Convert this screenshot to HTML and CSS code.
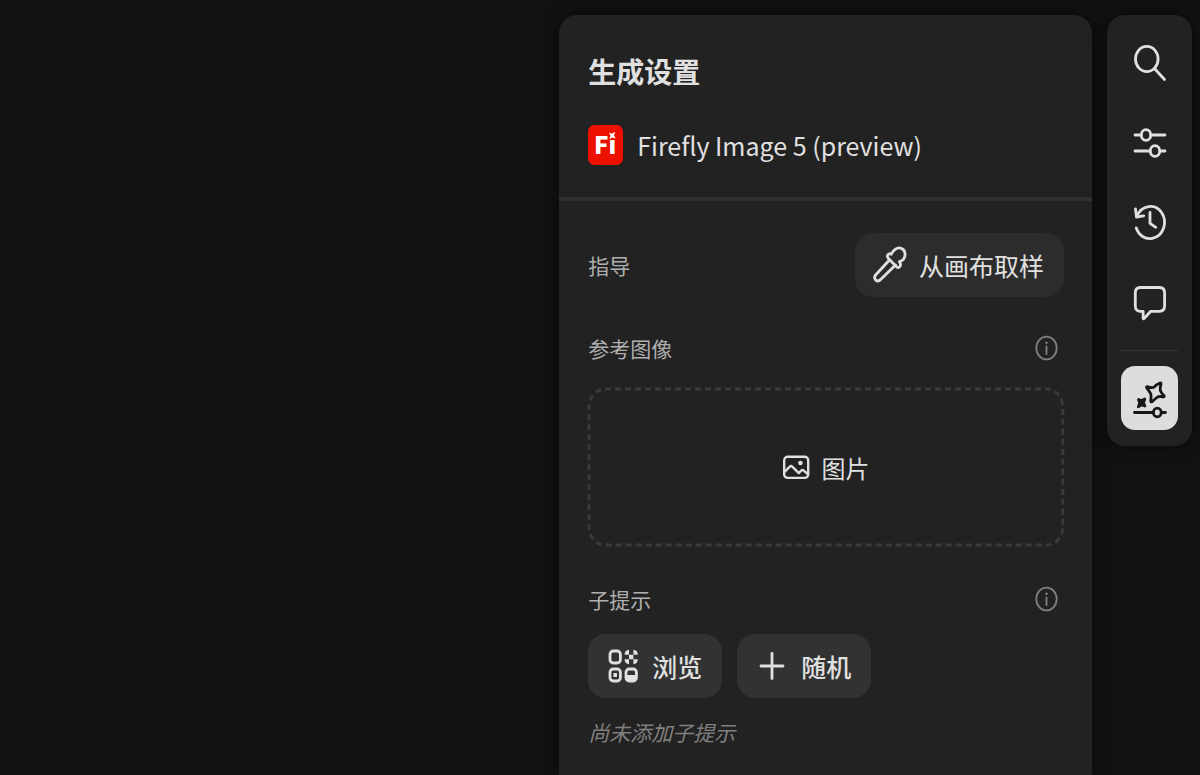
FILE: index.html
```html
<!DOCTYPE html>
<html lang="zh-CN">
<head>
  <meta charset="UTF-8">
  <meta name="viewport" content="width=device-width, initial-scale=1.0">
  <title>生成设置</title>
  <link rel="stylesheet" href="styles.css">
</head>
<body>
  <div class="app">
    <section class="panel" aria-labelledby="panel-title">
      <header class="panel-header">
        <h1 class="panel-title" id="panel-title">生成设置</h1>
        <div class="model">
          <svg class="model-logo" width="36" height="40" viewBox="0 0 36 40" aria-hidden="true">
            <rect width="35" height="40" rx="6" ry="7" fill="#eb1000"/>
            <text class="logo-text" x="6" y="29">Fi</text>
            <path d="M20 5h10v9.500h-10z" fill="#eb1000"/>
            <path d="M21 7.500l2.800 1.300 3.500-2-1.300 3.500 1.500 3.200-3.200-1-3 1.700 1.200-3.400z" fill="#fff"/>
          </svg>
          <span class="model-name">Firefly Image 5 (preview)</span>
        </div>
      </header>

      <div class="panel-body">
        <div class="row">
          <h2 class="label">指导</h2>
          <button type="button" class="button button-sample">
            <svg width="34" height="38" viewBox="0 0 34 38" class="icon" aria-hidden="true">
              <path d="M16.500 14L2.800 28.800c-3 3.400.4 8 4.300 5.200L22.500 19"/>
              <path d="M18.200 8.200c-2.400-1.600-5 1.600-3 4l8.300 8.600c2.200 2 5-.900 3.600-3.700l-.7-1.400c3.800-1 5.800-4 5.700-7.700-.3-5.400-5.600-7.600-9.600-4.800-1.900 1.300-3.300 2.900-4.300 5z"/>
            </svg>
            从画布取样
          </button>
        </div>

        <div class="row reference-row">
          <h2 class="label">参考图像</h2>
          <button type="button" class="info" aria-label="参考图像">
            <svg width="23" height="26" viewBox="0 0 23 26" aria-hidden="true">
              <ellipse cx="11.5" cy="13" rx="10.2" ry="11.4" fill="none" stroke="currentColor" stroke-width="1.8"/>
              <ellipse cx="11.5" cy="7.8" rx="1.2" ry="1.3" fill="currentColor"/>
              <path d="M11.5 11.5v7.5" fill="none" stroke="currentColor" stroke-width="1.8" stroke-linecap="round"/>
            </svg>
          </button>
        </div>
        <button type="button" class="dropzone">
          <svg width="27" height="24" viewBox="0 0 27 24" class="icon icon-image" aria-hidden="true">
            <rect x="1.2" y="1.7" width="24" height="21.2" rx="3.5"/>
            <path d="M1.500 17l5-5.200q1.500-1.400 3 0l6.300 6.300 2.400-2.400q1.300-1.200 2.600 0l4.300 3.600"/>
            <circle cx="17.4" cy="8" r="2.300" fill="currentColor" stroke="none"/>
          </svg>
          图片
          <svg class="dropzone-border" width="100%" height="100%" aria-hidden="true">
            <rect x="1" y="1" rx="16" ry="18"/>
          </svg>
        </button>

        <div class="row prompt-row">
          <h2 class="label">子提示</h2>
          <button type="button" class="info" aria-label="子提示">
            <svg width="23" height="26" viewBox="0 0 23 26" aria-hidden="true">
              <ellipse cx="11.5" cy="13" rx="10.2" ry="11.4" fill="none" stroke="currentColor" stroke-width="1.8"/>
              <ellipse cx="11.5" cy="7.8" rx="1.2" ry="1.3" fill="currentColor"/>
              <path d="M11.5 11.5v7.5" fill="none" stroke="currentColor" stroke-width="1.8" stroke-linecap="round"/>
            </svg>
          </button>
        </div>
        <div class="actions">
          <button type="button" class="button">
            <svg width="30" height="34" viewBox="0 0 30 34" class="icon" aria-hidden="true">
              <rect x="2" y="2" width="10.400" height="12" rx="3.200"/>
              <rect x="2" y="20" width="10.400" height="12" rx="3.200"/>
              <rect x="5.400" y="24" width="3.600" height="4" rx=".6" fill="currentColor" stroke="none"/>
              <rect x="18" y="20" width="10.400" height="12" rx="3.200"/>
              <path d="M18 26h10.400v3q0 3-3 3h-4.400q-3 0-3-3z" fill="currentColor" stroke="none"/>
              <path d="M21 5.700h4.400v4.600H21zM21 .8v4.900h-4.400q0-4.500 4.400-4.900zM25.400.8q4.400.4 4.400 4.900h-4.400zM16.600 10.300H21v4.900q-4.400-.4-4.400-4.900zM25.400 10.300h4.400q0 4.500-4.400 4.900z" fill="currentColor" stroke="none"/>
            </svg>
            浏览
          </button>
          <button type="button" class="button">
            <svg width="30" height="34" viewBox="0 0 30 34" class="icon" aria-hidden="true">
              <path d="M15 4.500v25M4 17h22"/>
            </svg>
            随机
          </button>
        </div>
        <p class="empty">尚未添加子提示</p>
      </div>
    </section>

    <nav class="toolbar" aria-label="工具">
      <button type="button" class="tool" aria-label="搜索">
        <svg width="34" height="38" viewBox="0 0 34 38" class="icon" aria-hidden="true">
          <ellipse cx="13.800" cy="15" rx="11.300" ry="12.600"/>
          <path d="M21.500 24.500L31.500 35.500"/>
        </svg>
      </button>
      <button type="button" class="tool" aria-label="调整">
        <svg width="34" height="38" viewBox="0 0 34 38" class="icon" aria-hidden="true">
          <path d="M2 11h6M18 11H32M2 27h15M27 27h5"/>
          <ellipse cx="13" cy="11" rx="4.700" ry="5.300"/>
          <ellipse cx="22" cy="27" rx="4.700" ry="5.300"/>
        </svg>
      </button>
      <button type="button" class="tool" aria-label="历史记录">
        <svg width="34" height="38" viewBox="0 0 34 38" class="icon" aria-hidden="true">
          <path d="M3.700 12.600C8.500.9 22.300-1 28.700 8.700c6.300 9.600 1.700 23.500-9.300 25.700-7.300 1.400-13.700-3-16.200-10.500"/>
          <path d="M2.500 5l1 8 7.200-1.200"/>
          <path d="M17 8.500v10.800l5.800 4"/>
        </svg>
      </button>
      <button type="button" class="tool" aria-label="评论">
        <svg width="34" height="38" viewBox="0 0 34 38" class="icon" aria-hidden="true">
          <path d="M7.300 3.500h19.300q5 0 5 5.500v12.800q0 5.500-5 5.500h-8.900l-6.600 7.200c-.6.600-1 .3-1-.5v-6.700H7.300q-5 0-5-5.500V9q0-5.500 5-5.500z"/>
        </svg>
      </button>
      <hr class="divider">
      <button type="button" class="tool tool-active" aria-label="生成设置" aria-pressed="true">
        <svg width="34" height="38" viewBox="0 0 34 38" class="icon" aria-hidden="true">
          <path d="M14.300 7.600Q18.500 9.300 21 8.300Q23 5.500 27 4Q28.300 3.600 28 5Q26.800 9 27.300 11.500Q28.600 14.500 31 16.600Q31.700 18 30.200 18Q27 17 24.500 18Q22 20 19 22.800Q17.700 23.300 17.700 21.800Q18.500 17.500 17.800 14.800Q16 11.500 13.700 8.800Q13.200 7.500 14.300 7.600z"/>
          <path d="M5.500 20.500l3 1.100 3.300-1.600-1.400 3.700 1.500 3.300-3.200-1.100-3.400 2 1.400-3.900z" fill="currentColor"/>
          <path d="M1.500 33.500h18.500M29 33.500h3.500"/>
          <ellipse cx="24.300" cy="33.500" rx="3.900" ry="4.300"/>
        </svg>
      </button>
    </nav>
  </div>
</body>
</html>
```
FILE: styles.css
```css
* {
  box-sizing: border-box;
}
body {
  margin: 0;
  background-color: #111111;
  color: #e0e0e0;
  font-family: "Noto Sans CJK SC", sans-serif;
}
button {
  font-family: inherit;
  color: inherit;
  border: none;
  background: none;
  padding: 0;
  cursor: pointer;
}
svg {
  display: block;
  flex-shrink: 0;
}
.app {
  display: flex;
  justify-content: flex-end;
  gap: 15px;
  min-height: 100vh;
  padding: 15px 8px 0;
}
.icon {
  fill: none;
  stroke: currentColor;
  stroke-width: 2.8;
  stroke-linecap: round;
  stroke-linejoin: round;
  overflow: visible;
}
.icon-image {
  stroke-width: 2.4;
}

/* settings panel */
.panel {
  width: 45%;
  background-color: #222222;
  border-radius: 18px 18px 0 0;
  box-shadow: 0 0 14px rgba(0, 0, 0, 0.5);
}
.panel-header {
  padding: 40px 28px 32px 29px;
  border-bottom: 4px solid #303030;
}
.panel-title {
  margin: 0 0 38px;
  font-size: 28px;
  line-height: 32px;
  font-weight: 700;
}
.model {
  display: flex;
  align-items: center;
  gap: 13px;
}
.logo-text {
  font-family: "Noto Sans CJK SC", sans-serif;
  font-size: 24px;
  font-weight: 900;
  fill: #ffffff;
}
.model-name {
  font-size: 25px;
  line-height: 40px;
}
.panel-body {
  padding: 32px 28px 24px 29px;
}
.row {
  display: flex;
  align-items: center;
  justify-content: space-between;
}
.label {
  margin: 0;
  font-size: 21px;
  line-height: 32px;
  font-weight: 400;
  color: #afafaf;
}
.info {
  margin-right: 6px;
  color: #808080;
}
.button {
  display: flex;
  align-items: center;
  gap: 14px;
  height: 64px;
  padding: 0 20px;
  border-radius: 18px;
  background-color: #323232;
  font-size: 25px;
  font-weight: 500;
}
.button-sample {
  gap: 12px;
  padding: 0 20px 0 18px;
  background-color: #2c2c2c;
  font-weight: 400;
}
.reference-row {
  margin: 35px 0 24px;
}
.dropzone {
  position: relative;
  display: flex;
  align-items: center;
  justify-content: center;
  gap: 12px;
  width: 100%;
  height: 158px;
  font-size: 24px;
}
.dropzone-border {
  position: absolute;
  inset: 0;
  fill: none;
  stroke: #3a3a3a;
  stroke-width: 3;
  stroke-dasharray: 6 4;
  overflow: visible;
}
.dropzone-border rect {
  width: calc(100% - 2px);
  height: calc(100% - 2px);
}
.prompt-row {
  margin: 37px 0 19px;
}
.actions {
  display: flex;
  gap: 15px;
}
.empty {
  margin: 18px 0 0;
  font-size: 21px;
  line-height: 32px;
  font-style: italic;
  color: #808080;
}

/* right toolbar */
.toolbar {
  display: flex;
  flex-direction: column;
  align-self: flex-start;
  gap: 16px;
  padding: 16px 14px;
  border-radius: 18px;
  background-color: #222222;
  box-shadow: 0 0 14px rgba(0, 0, 0, 0.5);
}
.tool {
  display: flex;
  align-items: center;
  justify-content: center;
  width: 57px;
  height: 64px;
  border-radius: 14px;
}
.tool-active {
  background-color: #dddddd;
  color: #161616;
}
.divider {
  width: 100%;
  height: 1px;
  margin: -1px 0;
  border: none;
  background-color: #363636;
}
```
